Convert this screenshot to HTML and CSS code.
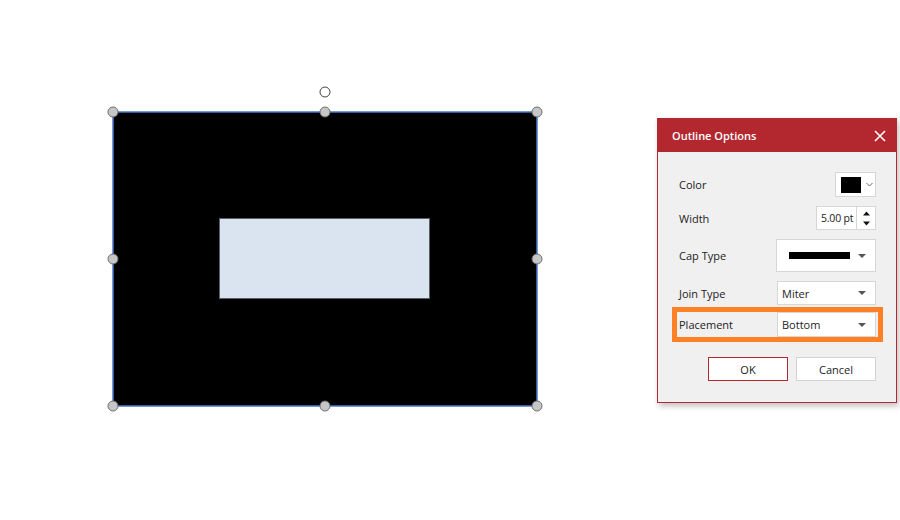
FILE: index.html
```html
<!DOCTYPE html>
<html>
<head>
    <meta charset="UTF-8">
    <title>Outline Options</title>
    <link rel="stylesheet" href="styles.css">
</head>
<body>
<div class="stage">
    <svg class="canvas" width="900" height="520" viewBox="0 0 900 520">
        <rect x="113" y="112" width="424" height="294" fill="#000" stroke="#4a78cc" stroke-width="1.5"/>
        <rect x="219.5" y="218.5" width="210" height="80" fill="#dae4f0" stroke="#5a5f66" stroke-width="1"/>
        <circle cx="325" cy="92" r="5" fill="#fff" stroke="#444" stroke-width="1"/>
        <g fill="#c6c6c6" stroke="#6e6e6e" stroke-width="1">
            <circle cx="113" cy="112" r="5"/>
            <circle cx="325" cy="112" r="5"/>
            <circle cx="537" cy="112" r="5"/>
            <circle cx="113" cy="259" r="5"/>
            <circle cx="537" cy="259" r="5"/>
            <circle cx="113" cy="406" r="5"/>
            <circle cx="325" cy="406" r="5"/>
            <circle cx="537" cy="406" r="5"/>
        </g>
    </svg>

    <div class="dialog">
        <div class="dialog-head">
            <span class="dialog-title">Outline Options</span>
            <svg class="close" width="12" height="12" viewBox="0 0 12 12">
                <path d="M1 1 L11 11 M11 1 L1 11" stroke="#fff" stroke-width="1.6"/>
            </svg>
        </div>
        <div class="dialog-body">
            <div class="row row-color">
                <span class="label">Color</span>
                <div class="color-btn">
                    <span class="swatch"></span>
                    <svg width="7" height="5" viewBox="0 0 7 5"><path d="M0.5 1 L3.5 4 L6.5 1" fill="none" stroke="#666" stroke-width="1"/></svg>
                </div>
            </div>
            <div class="row row-width">
                <span class="label">Width</span>
                <div class="spin">
                    <span class="spin-value">5.00 pt</span>
                    <span class="spin-arrows">
                        <svg width="7" height="5" viewBox="0 0 7 5"><path d="M0 4.5 L3.5 0.5 L7 4.5 Z" fill="#111"/></svg>
                        <svg width="7" height="5" viewBox="0 0 7 5"><path d="M0 0.5 L3.5 4.5 L7 0.5 Z" fill="#111"/></svg>
                    </span>
                </div>
            </div>
            <div class="row row-cap">
                <span class="label">Cap Type</span>
                <div class="select select-cap">
                    <span class="cap-line"></span>
                    <span class="arrow"></span>
                </div>
            </div>
            <div class="row row-join">
                <span class="label">Join Type</span>
                <div class="select">
                    <span class="select-text">Miter</span>
                    <span class="arrow"></span>
                </div>
            </div>
            <div class="row row-place">
                <span class="label">Placement</span>
                <div class="select">
                    <span class="select-text">Bottom</span>
                    <span class="arrow"></span>
                </div>
            </div>
            <div class="buttons">
                <button class="btn btn-ok">OK</button>
                <button class="btn">Cancel</button>
            </div>
        </div>
    </div>
</div>
</body>
</html>
```

FILE: styles.css
```css
* {
    margin: 0;
    padding: 0;
    box-sizing: border-box;
}

body {
    background: #fff;
    font-family: "Open Sans", "Noto Sans", Arial, sans-serif;
    font-size: 11px;
    color: #222;
}

.stage {
    position: relative;
    width: 900px;
    height: 520px;
    overflow: hidden;
}

.canvas {
    position: absolute;
    left: 0;
    top: 0;
}

/* dialog window */
.dialog {
    position: absolute;
    left: 657px;
    top: 118px;
    width: 240px;
    border: 1px solid #b3282e;
    background: #f0f0f0;
    box-shadow: 2px 3px 6px rgba(0, 0, 0, 0.25);
}

.dialog-head {
    display: flex;
    align-items: center;
    justify-content: space-between;
    height: 33px;
    padding: 0 10px 0 14px;
    background: #b3282e;
    color: #fff;
}

.dialog-title {
    font-size: 11px;
    font-weight: 600;
}

.dialog-body {
    display: flex;
    flex-direction: column;
    padding: 20px 20px 21px 20px;
}

.row {
    display: flex;
    align-items: center;
    justify-content: space-between;
    position: relative;
}

.row + .row {
    margin-top: 9px;
}

.row-color { height: 25px; }
.row-width { height: 24px; }
.row-cap { height: 33px; }
.row-join { height: 24px; }

.row.row-place {
    height: 25px;
    margin-top: 7px;
}

.row-place:before {
    content: "";
    position: absolute;
    left: -6px;
    right: -7px;
    top: -5px;
    bottom: -5px;
    border: 5px solid #fd8024;
}

.label {
    padding-left: 1px;
}

.color-btn {
    display: flex;
    align-items: center;
    gap: 5px;
    width: 41px;
    height: 25px;
    padding-left: 5px;
    background: #fff;
    border: 1px solid #d6d6d6;
}

.swatch {
    width: 20px;
    height: 16px;
    background: #000;
}

.spin {
    display: flex;
    width: 60px;
    height: 24px;
    background: #fff;
    border: 1px solid #d6d6d6;
}

.spin-value {
    flex: 1;
    line-height: 22px;
    padding-left: 4px;
    font-size: 10.5px;
    letter-spacing: -0.2px;
    white-space: nowrap;
}

.spin-arrows {
    display: flex;
    flex-direction: column;
    justify-content: center;
    align-items: center;
    gap: 5px;
    width: 19px;
    flex: none;
    border-left: 1px solid #d6d6d6;
}

.spin-arrows svg {
    display: block;
}

.select {
    display: flex;
    align-items: center;
    justify-content: space-between;
    width: 99px;
    height: 100%;
    padding: 0 9px 0 4px;
    background: #fff;
    border: 1px solid #d6d6d6;
}

.select-cap {
    width: 100px;
    padding-left: 12px;
}

.cap-line {
    width: 61px;
    height: 7px;
    background: #000;
}

.arrow {
    width: 0;
    height: 0;
    border-left: 4px solid transparent;
    border-right: 4px solid transparent;
    border-top: 4px solid #555;
}

.buttons {
    display: flex;
    justify-content: flex-end;
    gap: 8px;
    margin-top: 20px;
}

.btn {
    width: 80px;
    height: 24px;
    background: #fff;
    border: 1px solid #d2d2d2;
    font-family: inherit;
    font-size: 11px;
    color: #222;
}

.btn-ok {
    border-color: #b3282e;
}
```
